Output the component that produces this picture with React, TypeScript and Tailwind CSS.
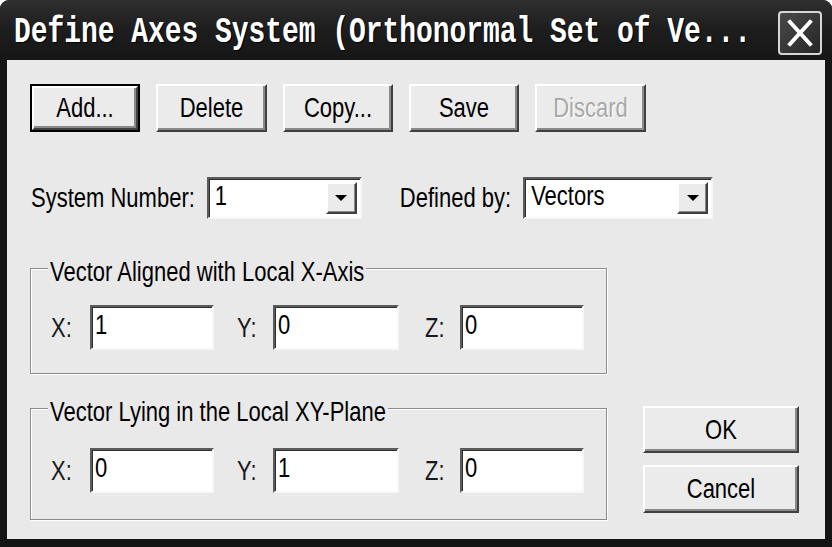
import type { ReactNode } from "react";

const ui = "font-['Liberation_Sans',Arial,sans-serif] text-[22px] text-black";

function Txt({ children, className = "" }: { children: ReactNode; className?: string }) {
  // dialog text in the picture is a tall, narrow bitmap face; stretch it a little
  return <span className={`inline-block scale-y-[1.28] leading-none ${className}`}>{children}</span>;
}

function Btn({
  children,
  def,
  disabled,
  className = "",
}: {
  children: ReactNode;
  def?: boolean;
  disabled?: boolean;
  className?: string;
}) {
  const face = (
    <div
      className={`flex h-full w-full items-center justify-center border-2 border-t-white border-l-white border-r-[#404040] border-b-[#404040] bg-[#ebebeb] shadow-[inset_-2px_-2px_0_#8a8a8a] ${
        disabled ? "text-[#a9a9a9] [text-shadow:1px_1px_0_#ffffff]" : "text-black"
      }`}
    >
      <Txt>{children}</Txt>
    </div>
  );
  if (def) {
    return <div className={`border-2 border-black ${className}`}>{face}</div>;
  }
  return <div className={className}>{face}</div>;
}

function Field({ value, className = "" }: { value: string; className?: string }) {
  return (
    <div
      className={`flex h-[45px] w-[124px] items-center border-2 border-t-[#5c5c5c] border-l-[#5c5c5c] border-r-[#f7f7f7] border-b-[#f7f7f7] bg-white pl-[3px] shadow-[inset_1px_1px_0_#2e2e2e] ${className}`}
    >
      <Txt className="-mt-[6px]">{value}</Txt>
    </div>
  );
}

function Combo({ value, width }: { value: string; width: string }) {
  return (
    <div
      className={`flex h-[42px] ${width} items-stretch border-2 border-t-[#5c5c5c] border-l-[#5c5c5c] border-r-[#f7f7f7] border-b-[#f7f7f7] bg-white shadow-[inset_1px_1px_0_#2e2e2e]`}
    >
      <div className="flex flex-1 items-center pl-[6px]">
        <Txt className="-mt-[4px]">{value}</Txt>
      </div>
      <div className="my-[3px] mr-[3px] flex w-[31px] items-center justify-center border-2 border-t-white border-l-white border-r-[#404040] border-b-[#404040] bg-[#ebebeb] shadow-[inset_-1px_-1px_0_#8a8a8a]">
        <svg width="14" height="8" viewBox="0 0 14 8">
          <path d="M1 1h12L7 7z" fill="#000" />
        </svg>
      </div>
    </div>
  );
}

const cells = [
  { label: "X:", item: "", lw: "w-[39px]", fw: "" },
  { label: "Y:", item: "ml-[23px]", lw: "w-[36px]", fw: "w-[126px]" },
  { label: "Z:", item: "ml-[26px]", lw: "w-[35px]", fw: "" },
];

function Group({
  title,
  rows,
  className = "",
}: {
  title: string;
  rows: string[];
  className?: string;
}) {
  return (
    <div
      className={`relative w-[577px] border border-[#8c8c8c] shadow-[inset_1px_1px_0_#ffffff,1px_1px_0_#ffffff] ${className}`}
    >
      <div className="absolute -top-[14px] left-[17px] bg-[#e9e9e9] px-[2px]">
        <Txt>{title}</Txt>
      </div>
      <div className="flex items-center pl-[20px]">
        {rows.map((v, i) => (
          <div key={i} className={`flex items-center ${cells[i].item}`}>
            <Txt className={`${cells[i].lw} text-[#1a1a1a]`}>{cells[i].label}</Txt>
            <Field value={v} className={cells[i].fw} />
          </div>
        ))}
      </div>
    </div>
  );
}

export default function App() {
  return (
    <div className="h-[547px] w-[832px] bg-white">
      <div className={`flex h-full w-full flex-col overflow-hidden rounded-t-[9px] bg-[#141414] ${ui}`}>
        {/* title bar */}
        <div className="flex h-[60px] shrink-0 items-center justify-between bg-gradient-to-b from-[#2f2f2f] via-[#1d1d1d] to-[#161616] pl-[14px] pr-[10px] pt-[6px]">
          <span className="inline-block scale-y-[1.3] font-['Liberation_Mono','DejaVu_Sans_Mono',monospace] text-[28px] font-bold tracking-[-0.05px] text-white [text-shadow:1px_1px_0_#000]">
            Define Axes System (Orthonormal Set of Ve...
          </span>
          <div className="flex h-[44px] w-[44px] items-center justify-center rounded-[4px] border-2 border-[#d6d6d6] bg-gradient-to-br from-[#4a4a4a] to-[#262626]">
            <svg width="26" height="28" viewBox="0 0 26 28">
              <path d="M3 3L23 25M23 3L3 25" stroke="#fff" strokeWidth="4" strokeLinecap="square" />
            </svg>
          </div>
        </div>

        {/* client area */}
        <div className="mx-[7px] mb-[8px] flex-1 bg-[#e9e9e9] pl-[23px] pt-[24px]">
          <div className="flex gap-[16px]">
            <Btn def className="h-[48px] w-[110px]">Add...</Btn>
            <Btn className="h-[48px] w-[111px]">Delete</Btn>
            <Btn className="h-[48px] w-[110px]">Copy...</Btn>
            <Btn className="h-[48px] w-[110px]">Save</Btn>
            <Btn disabled className="h-[48px] w-[111px]">Discard</Btn>
          </div>

          <div className="mt-[45px] flex items-center">
            <Txt className="mr-[12px] ml-[1px]">System Number:</Txt>
            <Combo value="1" width="w-[155px]" />
            <Txt className="ml-[38px] mr-[12px]">Defined by:</Txt>
            <Combo value="Vectors" width="w-[190px]" />
          </div>

          <div className="flex">
            <div className="flex flex-col">
              <Group title="Vector Aligned with Local X-Axis" rows={["1", "0", "0"]} className="mt-[49px] h-[106px] pt-[36px]" />
              <Group title="Vector Lying in the Local XY-Plane" rows={["0", "1", "0"]} className="mt-[34px] h-[112px] pt-[39px]" />
            </div>
            <div className="ml-[36px] flex flex-col gap-[12px] pt-[187px]">
              <Btn className="h-[47px] w-[156px]">OK</Btn>
              <Btn className="h-[48px] w-[156px]">Cancel</Btn>
            </div>
          </div>
        </div>
      </div>
    </div>
  );
}
